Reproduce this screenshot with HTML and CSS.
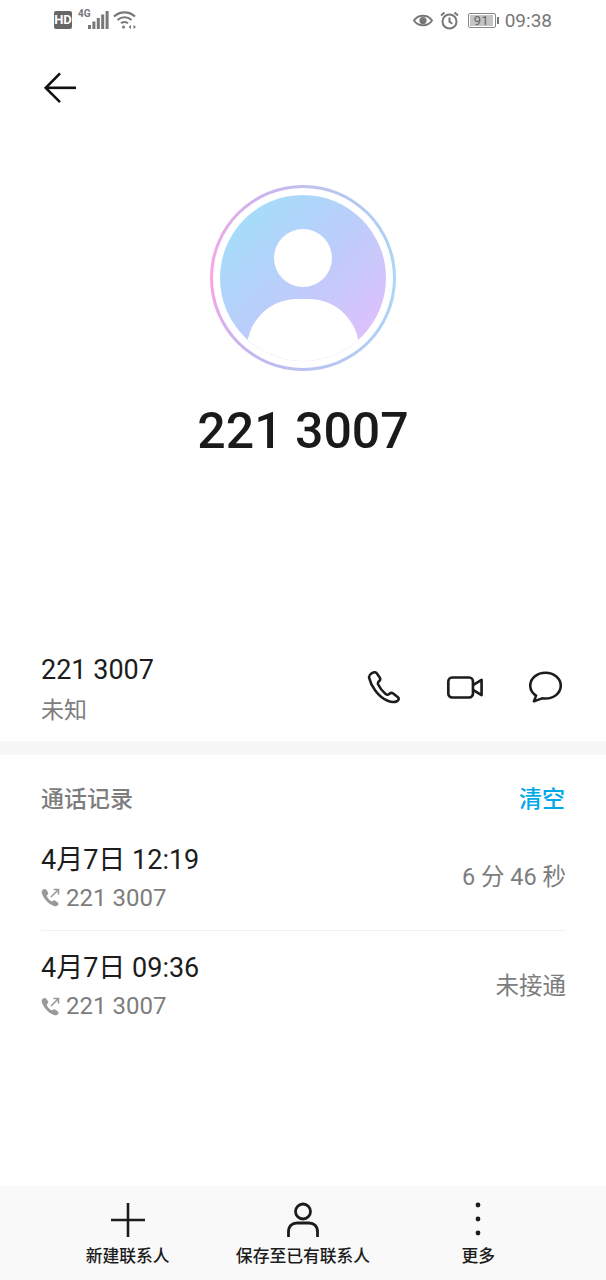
FILE: index.html
```html
<!DOCTYPE html>
<html lang="zh-CN">
<head>
    <meta charset="UTF-8">
    <meta name="viewport" content="width=device-width, initial-scale=1.0">
    <title>221 3007</title>
    <link rel="stylesheet" href="styles.css">
</head>
<body>
<div class="screen">

    <!-- Status bar -->
    <div class="status-bar">
        <div class="status-group">
            <span class="hd-badge">HD</span>
            <span class="net-label">4G</span>
            <svg class="signal" width="21" height="18" viewBox="0 0 21 18">
                <rect x="0" y="14" width="3" height="4" fill="#777"/>
                <rect x="4.400" y="10.500" width="3" height="7.500" fill="#777"/>
                <rect x="8.800" y="7" width="3" height="11" fill="#777"/>
                <rect x="13.200" y="3.500" width="3" height="14.500" fill="#777"/>
                <rect x="17.600" y="0" width="3" height="18" fill="#777"/>
            </svg>
            <svg class="wifi" width="23" height="20" viewBox="0 0 23 20" fill="none" stroke="#777" stroke-width="2.100">
                <path d="M1 6.500C7 1 16 1 22 6.500"/>
                <path d="M4.500 10C8.500 6.400 14.500 6.400 18.500 10"/>
                <path d="M8 13.300C10 11.600 13 11.600 15 13.300"/>
                <circle cx="10.500" cy="17" r="1.500" fill="#777" stroke="none"/>
                <path d="M15.500 17l2.500-2v4zM23 17l-2.500-2v4z" fill="#777" stroke="none"/>
            </svg>
        </div>
        <div class="status-group status-right">
            <svg class="eye-icon" width="20" height="15" viewBox="0 0 21 15" fill="none" stroke="#777" stroke-width="2">
                <path d="M1 7.500C5.500 .8 15.500 .8 20 7.500C15.500 14.200 5.500 14.200 1 7.500Z"/>
                <circle cx="10.500" cy="7.500" r="3.800" fill="#777" stroke="none"/>
            </svg>
            <svg class="alarm-icon" width="19" height="19" viewBox="0 0 19 19" fill="none" stroke="#777" stroke-width="2">
                <circle cx="9.500" cy="10.500" r="7"/>
                <path d="M9.500 6.500v4.300l2.800 2"/>
                <path d="M1 4.500L4.500 1.500M18 4.500L14.500 1.500"/>
            </svg>
            <div class="battery"><span class="battery-level">91</span></div>
            <span class="battery-tip"></span>
            <span class="clock">09:38</span>
        </div>
    </div>

    <!-- Back arrow -->
    <div class="top-bar">
        <svg width="33" height="32" viewBox="0 0 34 32" fill="none" stroke="#111" stroke-width="2.700">
            <path d="M16.500 1L1.800 15.800L16.500 30.500"/>
            <path d="M2 15.800H33"/>
        </svg>
    </div>

    <!-- Avatar and number -->
    <div class="profile">
        <div class="avatar-ring">
            <div class="avatar-fill">
                <span class="avatar-head"></span>
                <span class="avatar-body"></span>
            </div>
        </div>
        <h1 class="number">221 3007</h1>
    </div>

    <!-- Contact row -->
    <div class="contact-row">
        <div>
            <div class="contact-number">221 3007</div>
            <div class="contact-place">未知</div>
        </div>
        <div class="contact-actions">
            <svg width="34" height="33" viewBox="0 0 36 36" fill="none" stroke="#1c1c1c" stroke-width="2.800" stroke-linejoin="round">
                <path d="M4.500 2.500C2.500 3.800 1.300 5.400 1.800 7.500C3.600 15.500 11 28 22 32.500C25.500 34 29 34.500 32 33C34 32 34.800 30 33.200 28.600L28 24.600C26.600 23.600 25.500 23.500 24 24.800C22.600 26 21.500 26.500 19.800 25.200C16 22 13.200 18 11.500 14.500C11 13 11.600 12 12.800 11C14 10 14.200 8.800 13.500 7.400L10.300 2.800C8.900 1 6.600 1.200 4.500 2.500Z"/>
            </svg>
            <svg width="36" height="23" viewBox="0 0 38 24" fill="none" stroke="#1c1c1c" stroke-width="2.800" stroke-linejoin="round">
                <rect x="1.400" y="1.400" width="26" height="21.200" rx="4"/>
                <path d="M27.400 9.500L36.500 4V20L27.400 14.500"/>
            </svg>
            <svg width="33" height="32" viewBox="0 0 35 33" fill="none" stroke="#1c1c1c" stroke-width="2.700" stroke-linejoin="round">
                <path d="M17.500 1.300C8.500 1.300 1.300 7.300 1.300 15C1.300 19.500 3.800 23.300 7.500 25.600L5.200 31.800L13.800 28.500C15 28.700 16.200 28.800 17.500 28.800C26.500 28.800 33.700 22.800 33.700 15C33.700 7.300 26.500 1.300 17.500 1.300Z"/>
            </svg>
        </div>
    </div>

    <div class="band"></div>

    <!-- Call log -->
    <div class="log">
        <div class="log-head">
            <span class="log-title">通话记录</span>
            <span class="log-clear">清空</span>
        </div>

        <div class="log-row log-row-first">
            <div>
                <div class="log-date">4月7日 12:19</div>
                <div class="log-sub">
                    <svg width="19" height="19" viewBox="0 0 19 19">
                        <path d="M2 1.500C.8 2.300.4 3.500.8 5C2.200 10.500 7.500 16 13 18C14.800 18.500 16.500 18 17.300 16.700C17.800 15.800 17.500 15 16.800 14.500L14 12.500C13.200 12 12.500 12.200 11.800 12.900C11.200 13.500 10.500 13.500 9.800 13C8.200 11.800 6.800 10 6 8.400C5.600 7.600 6 7 6.600 6.500C7.300 5.800 7.400 5 7 4.300L5.300 1.700C4.600.6 3.200.7 2 1.500Z" fill="#999"/>
                        <path d="M10 9L17 2M12.500 1.500H17.500V6.500" fill="none" stroke="#999" stroke-width="1.600"/>
                    </svg>
                    <span>221 3007</span>
                </div>
            </div>
            <span class="log-result">6 分 46 秒</span>
        </div>

        <div class="log-row">
            <div>
                <div class="log-date">4月7日 09:36</div>
                <div class="log-sub">
                    <svg width="19" height="19" viewBox="0 0 19 19">
                        <path d="M2 1.500C.8 2.300.4 3.500.8 5C2.200 10.500 7.500 16 13 18C14.800 18.500 16.500 18 17.300 16.700C17.800 15.800 17.500 15 16.800 14.500L14 12.500C13.200 12 12.500 12.200 11.800 12.900C11.200 13.500 10.500 13.500 9.800 13C8.200 11.800 6.800 10 6 8.400C5.600 7.600 6 7 6.600 6.500C7.300 5.800 7.400 5 7 4.300L5.300 1.700C4.600.6 3.200.7 2 1.500Z" fill="#999"/>
                        <path d="M10 9L17 2M12.500 1.500H17.500V6.500" fill="none" stroke="#999" stroke-width="1.600"/>
                    </svg>
                    <span>221 3007</span>
                </div>
            </div>
            <span class="log-result">未接通</span>
        </div>
    </div>

    <!-- Bottom toolbar -->
    <div class="toolbar">
        <div class="tool">
            <svg width="36" height="36" viewBox="0 0 36 36" stroke="#1c1c1c" stroke-width="2.600">
                <path d="M18 1V35M1 18H35"/>
            </svg>
            <span>新建联系人</span>
        </div>
        <div class="tool">
            <svg width="36" height="36" viewBox="0 0 36 36" fill="none" stroke="#1c1c1c" stroke-width="2.800">
                <circle cx="18" cy="9.500" r="7.500"/>
                <path d="M3.500 35V30C3.500 24 7 21 12 21H24C29 21 32.500 24 32.500 30V35"/>
            </svg>
            <span>保存至已有联系人</span>
        </div>
        <div class="tool">
            <svg width="36" height="36" viewBox="0 0 36 36" fill="#1c1c1c">
                <circle cx="18" cy="3" r="2.400"/>
                <circle cx="18" cy="17" r="2.400"/>
                <circle cx="18" cy="31" r="2.400"/>
            </svg>
            <span>更多</span>
        </div>
    </div>

</div>
</body>
</html>
```

FILE: styles.css
```css
/* Basic page styling */
body {
    margin: 0;
    background-color: #fff;
    color: #1c1c1c;
    font-family: Roboto, "Noto Sans CJK SC", sans-serif;
}

.screen {
    width: 606px;
    height: 1280px;
    display: flex;
    flex-direction: column;
    overflow: hidden;
}

/* Status bar */
.status-bar {
    height: 40px;
    padding: 0 54px;
    display: flex;
    justify-content: space-between;
    align-items: center;
    color: #777;
}

.status-group {
    display: flex;
    align-items: center;
}

.hd-badge {
    width: 18px;
    height: 18px;
    border-radius: 2px;
    background-color: #666;
    color: #fff;
    font-size: 13px;
    font-weight: 700;
    line-height: 18px;
    text-align: center;
}

.net-label {
    margin: -12px 0 0 6px;
    font-size: 10px;
    font-weight: 700;
    line-height: 10px;
}

.signal {
    margin: 0 4px 0 -3px;
}

.wifi {
    margin-right: -1px;
}

.eye-icon {
    margin-right: 7px;
}

.alarm-icon {
    margin-right: 9px;
}

.battery {
    width: 28px;
    height: 15px;
    border: 1px solid #888;
    border-radius: 2px;
    padding: 1px;
    box-sizing: border-box;
    display: flex;
}

.battery-level {
    width: 23px;
    background-color: #c4c4c4;
    color: #666;
    font-size: 13px;
    line-height: 11px;
    text-align: center;
}

.battery-tip {
    width: 2px;
    height: 7px;
    margin: 0 6px 0 1px;
    background-color: #777;
}

.clock {
    font-size: 19px;
    color: #777;
}

.top-bar {
    height: 65px;
    padding: 32px 0 0 44px;
    flex: none;
}

/* Avatar */
.profile {
    margin-top: 48px;
    height: 456px;
    flex: none;
    display: flex;
    flex-direction: column;
    align-items: center;
}

.avatar-ring {
    width: 186px;
    height: 186px;
    box-sizing: border-box;
    border-radius: 50%;
    background:
        linear-gradient(#fff, #fff) padding-box,
        conic-gradient(from 0deg, #bfc0ee, #a9d8f5 90deg, #b8c4f2 170deg, #c5b5f0 220deg, #fba4e6 270deg, #c9b5ee 340deg, #bfc0ee) border-box;
    border: 3px solid transparent;
    padding: 7px;
}

.avatar-fill {
    width: 100%;
    height: 100%;
    border-radius: 50%;
    position: relative;
    overflow: hidden;
    background: linear-gradient(135deg, #a3def9 10%, #bccdfb 50%, #e0bffb 90%);
}

.avatar-head {
    position: absolute;
    left: 54px;
    top: 34px;
    width: 58px;
    height: 58px;
    border-radius: 50%;
    background-color: #fff;
}

.avatar-body {
    position: absolute;
    left: 27px;
    top: 104px;
    width: 112px;
    height: 90px;
    border-radius: 50px 50px 0 0;
    background-color: #fff;
}

.number {
    margin: 28px 0 0;
    font-size: 50px;
    font-weight: 500;
    line-height: 64px;
    color: #1a1a1a;
}

/* Contact row */
.contact-row {
    height: 100px;
    flex: none;
    padding: 0 44px 0 41px;
    display: flex;
    justify-content: space-between;
    align-items: center;
}

.contact-number {
    font-size: 27px;
    line-height: 40px;
}

.contact-place {
    font-size: 23px;
    line-height: 42px;
    color: #7d7d7d;
}

.contact-actions {
    display: flex;
    align-items: center;
    gap: 46px;
    margin-bottom: 8px;
}

.band {
    height: 14px;
    flex: none;
    background-color: #f7f7f7;
}

/* Call log */
.log {
    padding: 0 40px 0 41px;
    flex: 1;
}

.log-head {
    height: 68px;
    box-sizing: border-box;
    padding-top: 16px;
    display: flex;
    justify-content: space-between;
    align-items: center;
    font-size: 23px;
}

.log-title {
    color: #7d7d7d;
    font-weight: 500;
}

.log-clear {
    color: #00a8e8;
    font-weight: 500;
    margin-right: 1px;
}

.log-row {
    height: 108px;
    box-sizing: border-box;
    display: flex;
    justify-content: space-between;
    align-items: center;
}

.log-row-first {
    border-bottom: 1px solid #f1f1f1;
}

.log-date {
    font-size: 27px;
    line-height: 42px;
}

.log-sub {
    display: flex;
    align-items: center;
    gap: 6px;
    font-size: 24px;
    line-height: 34px;
    color: #7d7d7d;
}

.log-result {
    font-size: 23.500px;
    color: #7d7d7d;
    margin-bottom: 3px;
}

/* Bottom toolbar */
.toolbar {
    height: 94px;
    flex: none;
    padding: 0 40px;
    display: grid;
    grid-template-columns: repeat(3, 1fr);
    background-color: #f9f9f9;
}

.tool {
    display: flex;
    flex-direction: column;
    align-items: center;
    padding-top: 16px;
    font-size: 16.800px;
    font-weight: 500;
    line-height: 24px;
    color: #1c1c1c;
}

.tool svg {
    margin-bottom: 6px;
}
```
